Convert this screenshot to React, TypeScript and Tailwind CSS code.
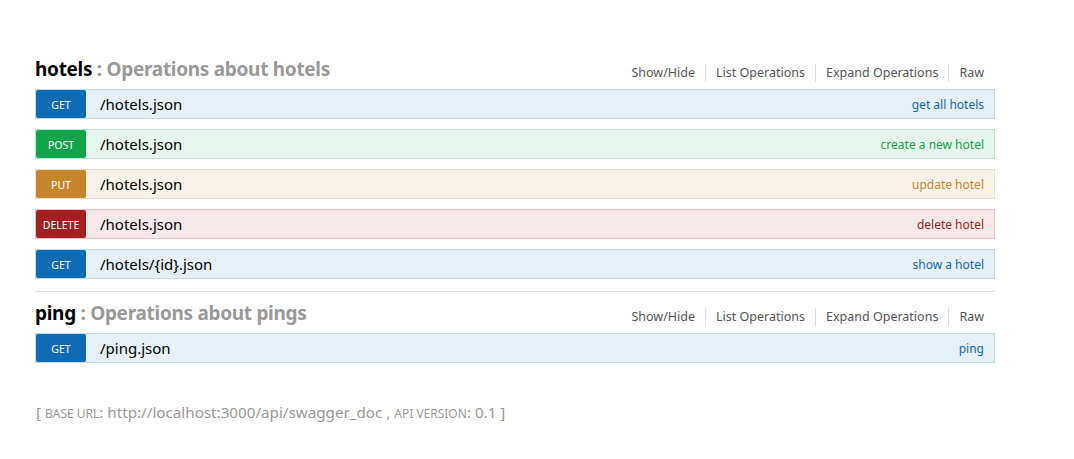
import React from 'react';

type Method = 'GET' | 'POST' | 'PUT' | 'DELETE';

interface Operation {
  method: Method;
  path: string;
  summary: string;
}

interface Resource {
  name: string;
  description: string;
  operations: Operation[];
}

const methodStyles: Record<Method, { row: string; badge: string; summary: string }> = {
  GET: {
    row: 'bg-[#e7f0f7] border-[#c3d9ec]',
    badge: 'bg-[#0f6ab4]',
    summary: 'text-[#0f6ab4]',
  },
  POST: {
    row: 'bg-[#e7f6ec] border-[#c3e8d1]',
    badge: 'bg-[#10a54a]',
    summary: 'text-[#10a54a]',
  },
  PUT: {
    row: 'bg-[#f9f2e9] border-[#f0e0ca]',
    badge: 'bg-[#c5862b]',
    summary: 'text-[#c5862b]',
  },
  DELETE: {
    row: 'bg-[#f5e8e8] border-[#e8c6c7]',
    badge: 'bg-[#a41e22]',
    summary: 'text-[#a41e22]',
  },
};

const resources: Resource[] = [
  {
    name: 'hotels',
    description: 'Operations about hotels',
    operations: [
      { method: 'GET', path: '/hotels.json', summary: 'get all hotels' },
      { method: 'POST', path: '/hotels.json', summary: 'create a new hotel' },
      { method: 'PUT', path: '/hotels.json', summary: 'update hotel' },
      { method: 'DELETE', path: '/hotels.json', summary: 'delete hotel' },
      { method: 'GET', path: '/hotels/{id}.json', summary: 'show a hotel' },
    ],
  },
  {
    name: 'ping',
    description: 'Operations about pings',
    operations: [{ method: 'GET', path: '/ping.json', summary: 'ping' }],
  },
];

const headerLinks = ['Show/Hide', 'List Operations', 'Expand Operations', 'Raw'];

function OperationRow({ op }: { op: Operation }) {
  const s = methodStyles[op.method];
  return (
    <li className={`flex h-[30px] items-stretch border ${s.row}`}>
      <span
        className={`flex w-[50px] items-center justify-center rounded-[2px] pt-[3px] text-[10.5px] text-white ${s.badge}`}
      >
        {op.method}
      </span>
      <span className="flex items-center pl-[14px] text-[15px] text-black">{op.path}</span>
      <span className={`ml-auto flex items-center pr-[10px] pt-[2px] text-[12px] ${s.summary}`}>
        {op.summary}
      </span>
    </li>
  );
}

function ResourceBlock({ resource, last }: { resource: Resource; last: boolean }) {
  return (
    <div className={last ? '' : 'border-b border-[#ddd] pb-[12px] mb-[10px]'}>
      <div className="flex h-[30px] items-end justify-between pb-[3px] mb-[1px]">
        <h2 className="mb-[3px] text-[19px] font-bold leading-[26px] tracking-[-0.3px] text-black">
          {resource.name}
          <span className="text-[#999]"> : {resource.description}</span>
        </h2>
        <ul className="flex items-center pb-[3px] pr-[11px] text-[12.5px] text-[#555]">
          {headerLinks.map((link, i) => (
            <li
              key={link}
              className={`leading-[18px] px-[10px] ${
                i < headerLinks.length - 1 ? 'border-r border-[#ddd]' : 'pr-0'
              }`}
            >
              {link}
            </li>
          ))}
        </ul>
      </div>
      <ul className="flex flex-col gap-[10px]">
        {resource.operations.map((op, i) => (
          <OperationRow key={i} op={op} />
        ))}
      </ul>
    </div>
  );
}

export default function App() {
  return (
    <div
      className="min-h-[459px] bg-white pt-[58px] pl-[35px]"
      style={{ fontFamily: '"Noto Sans", "Open Sans", sans-serif' }}
    >
      <div className="w-[960px]">
        {resources.map((r, i) => (
          <ResourceBlock key={r.name} resource={r} last={i === resources.length - 1} />
        ))}
        <div className="mt-[38px] pl-[1px] text-[15.2px] text-[#999]">
          [ <span className="text-[12px] uppercase">Base URL</span>: http://localhost:3000/api/swagger_doc
          , <span className="text-[12px] uppercase">API Version</span>: 0.1 ]
        </div>
      </div>
    </div>
  );
}
